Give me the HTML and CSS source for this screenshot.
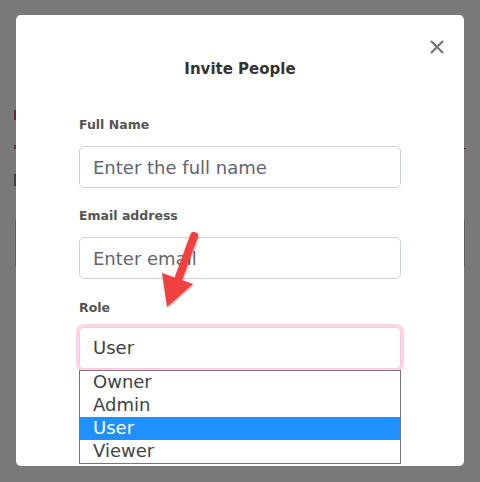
FILE: index.html
```html
<!DOCTYPE html>
<html lang="en">
<head>
<meta charset="utf-8">
<title>Invite People</title>
<link rel="stylesheet" href="styles.css">
</head>
<body>
  <div class="page">
    <div class="bg-heading">Team</div>
    <div class="bg-tabs"></div>
    <div class="bg-text">Search</div>
    <div class="bg-box"></div>
  </div>
  <div class="overlay">
    <div class="modal">
      <button class="close" type="button" aria-label="Close">
        <svg viewBox="0 0 14 14" width="14" height="14"><path d="M1 1 L13 13 M13 1 L1 13" stroke="#767676" stroke-width="2.2" fill="none"/></svg>
      </button>
      <h2 class="title">Invite People</h2>
      <form class="form">
        <label class="label">Full Name</label>
        <input class="input" type="text" placeholder="Enter the full name">
        <label class="label label-gap">Email address</label>
        <input class="input" type="email" placeholder="Enter email">
        <label class="label label-gap label-role">Role</label>
        <div class="select">User</div>
        <ul class="options">
          <li class="option">Owner</li>
          <li class="option">Admin</li>
          <li class="option selected">User</li>
          <li class="option">Viewer</li>
        </ul>
      </form>
      <svg class="arrow" viewBox="0 0 60 100" width="60" height="100">
        <line x1="44" y1="16" x2="29" y2="57" stroke="#f2403f" stroke-width="8" stroke-linecap="round"/>
        <polygon points="12,53 43,64 17,87" fill="#f2403f"/>
      </svg>
    </div>
  </div>
</body>
</html>
```

FILE: styles.css
```css
* { box-sizing: border-box; }

html, body {
  margin: 0;
  padding: 0;
  width: 480px;
  height: 482px;
  overflow: hidden;
  background: #ffffff;
  font-family: "DejaVu Sans", "Liberation Sans", sans-serif;
}

.page {
  padding: 110px 14px 0 14px;
}

.bg-heading {
  width: 2px;
  height: 10px;
  background: #e0447f;
  color: transparent;
  font-size: 1px;
  overflow: hidden;
}

.bg-tabs {
  margin-top: 25px;
  height: 4px;
  width: 452px;
  border-left: 3px solid #f05a92;
  border-bottom: 1px solid #d9354f;
}

.bg-text {
  margin-top: 25px;
  width: 2px;
  height: 12px;
  background: #888;
  color: transparent;
  font-size: 1px;
  overflow: hidden;
}

.bg-box {
  margin-top: 34px;
  margin-left: 1px;
  width: 450px;
  height: 47px;
  border-left: 1px solid #c8c8c8;
  border-right: 1px solid #c8c8c8;
}

.overlay {
  position: fixed;
  inset: 0;
  background: rgba(0, 0, 0, 0.525);
  padding: 15px 0 0 16px;
}

.modal {
  position: relative;
  width: 448px;
  height: 451px;
  background: #ffffff;
  border-radius: 5px;
  padding-top: 44px;
}

.close {
  position: absolute;
  top: 25px;
  right: 20px;
  width: 14px;
  height: 14px;
  padding: 0;
  border: 0;
  background: none;
  display: flex;
}

.title {
  margin: 0;
  font-size: 15px;
  line-height: 20px;
  font-weight: 700;
  color: #333333;
  text-align: center;
}

.form {
  margin: 38px 0 0 0;
  padding: 0 63px;
  display: flex;
  flex-direction: column;
}

.label {
  display: block;
  font-size: 12.5px;
  line-height: 16px;
  font-weight: 700;
  color: #555555;
  margin-bottom: 13px;
}

.label-gap { margin-top: 20px; }
.label-role { margin-top: 21px; margin-bottom: 11px; }

.input {
  width: 322px;
  height: 42px;
  border: 1px solid #ccd3da;
  border-radius: 5px;
  padding: 0 13px;
  font-family: inherit;
  font-size: 18px;
  color: #333;
  background: #fff;
  outline: none;
}

.input::placeholder { color: #5f6670; }

.select {
  width: 322px;
  height: 42px;
  border: 1px solid #ffc6de;
  border-radius: 5px;
  box-shadow: 0 0 0 3px #ffd3e6;
  padding: 0 13px 2px 13px;
  display: flex;
  align-items: center;
  font-size: 18px;
  color: #3b3f45;
}

.options {
  position: relative;
  margin: 1px 0 0 0;
  padding: 0;
  list-style: none;
  width: 322px;
  border: 1px solid #767676;
  background: #fff;
}

.option {
  height: 23px;
  line-height: 22px;
  padding-left: 13px;
  font-size: 18px;
  color: #3f434a;
}

.option.selected {
  background: #1e90ff;
  color: #ffffff;
}

.arrow {
  position: absolute;
  left: 134px;
  top: 205px;
  filter: drop-shadow(1px 1px 1px rgba(0, 0, 0, 0.3));
}
```
